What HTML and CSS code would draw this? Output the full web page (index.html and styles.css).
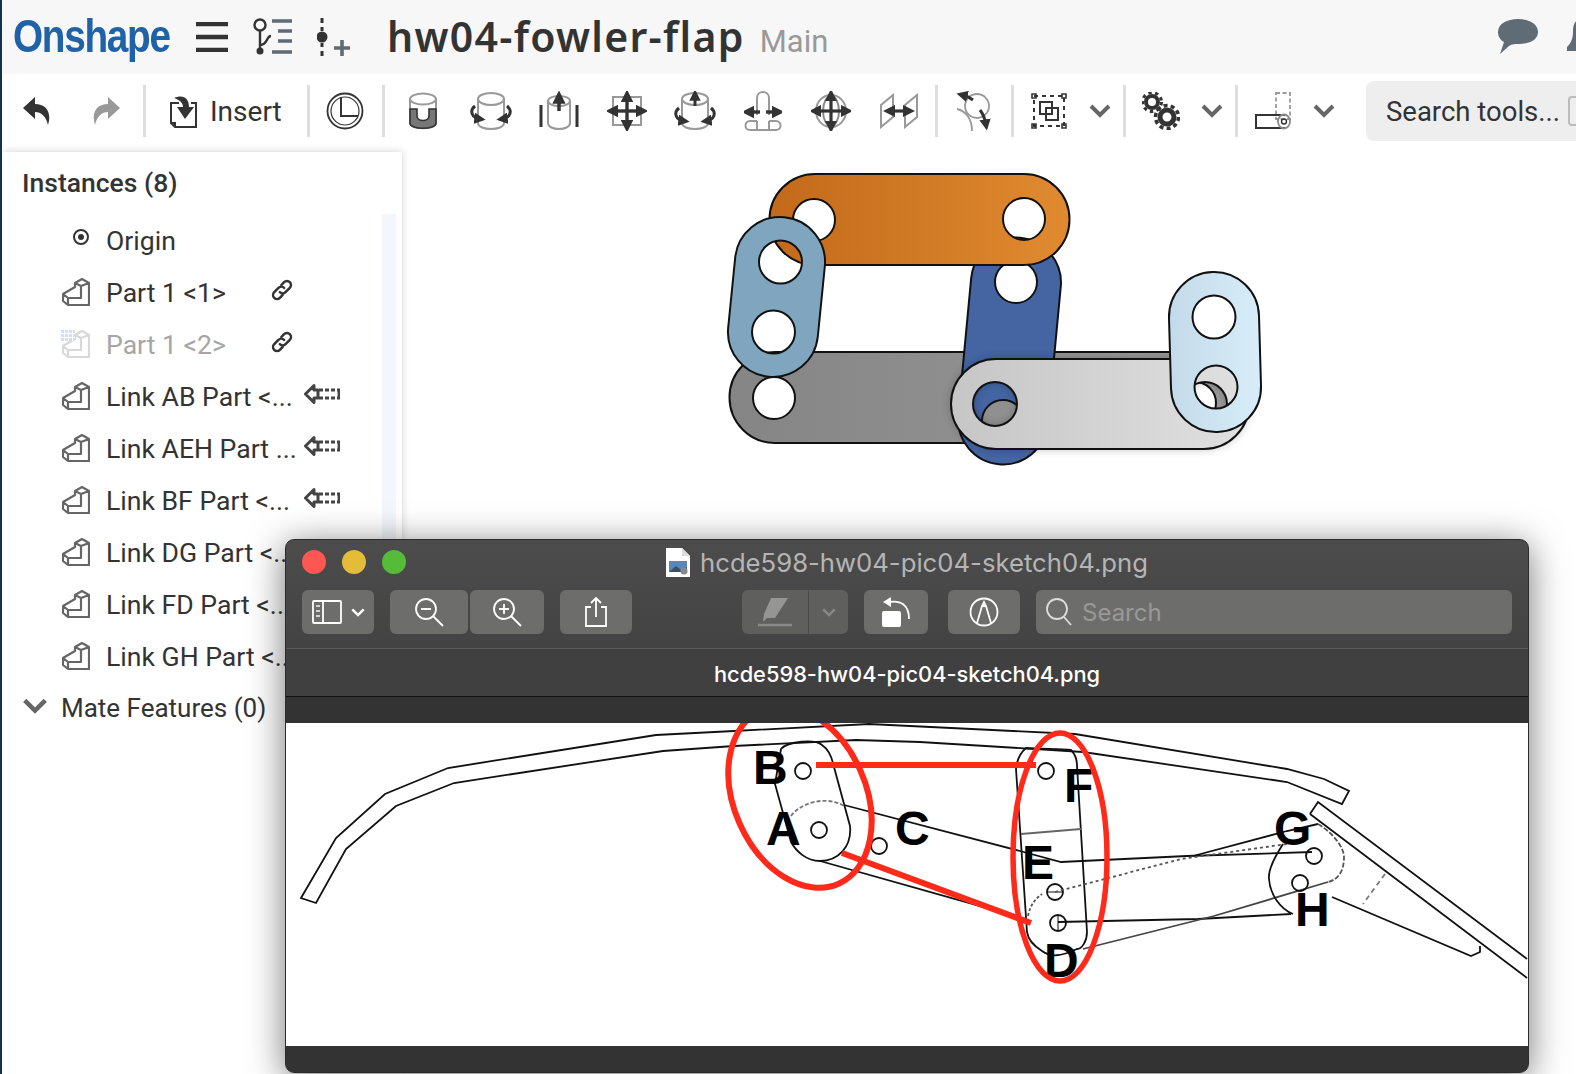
FILE: index.html
```html
<!DOCTYPE html>
<html lang="en">
<head>
    <meta charset="UTF-8">
    <meta name="viewport" content="width=device-width, initial-scale=1.0">
    <title>hw04-fowler-flap</title>
    <link rel="stylesheet" href="styles.css">
</head>
<body>

<!-- shared icons -->
<svg class="defs" width="0" height="0">
    <symbol id="part" viewBox="0 0 28 28">
        <path d="M1 16 L13 9 V5 L20 1 L27 5 V27 H6 L1 23 Z M19 8 L27 5 M19 8 L13 5 M19 8 V20 H6 L1 16 M6 20 V27" fill="none" stroke="currentColor" stroke-width="2.200" stroke-linejoin="round"/>
    </symbol>
    <symbol id="chain" viewBox="0 0 24 24">
        <path transform="translate(12 12) rotate(-45)" d="M3 0 a4 4 0 0 0 -4 -4 H-7 a4 4 0 0 0 0 8 H-3 M-3 0 a4 4 0 0 0 4 4 H7 a4 4 0 0 0 0 -8 H3" fill="none" stroke="currentColor" stroke-width="2.500" stroke-linecap="round"/>
    </symbol>
    <symbol id="ref-arrow" viewBox="0 0 36 20">
        <path d="M10 1.500 L1.500 10 L10 18.500 V14 H14 V6 H10 Z" fill="none" stroke="currentColor" stroke-width="3" stroke-linejoin="round"/>
        <path d="M15 6 H36 M15 14 H36" fill="none" stroke="currentColor" stroke-width="3" stroke-dasharray="4 2"/>
        <path d="M34.800 6 V14" fill="none" stroke="currentColor" stroke-width="2.400"/>
    </symbol>
    <symbol id="chev" viewBox="0 0 22 14">
        <path d="M2 2 L11 11 L20 2" fill="none" stroke="currentColor" stroke-width="4"/>
    </symbol>
    <marker id="tip" viewBox="0 0 8 8" refX="4" refY="4" markerWidth="3.800" markerHeight="3.800" orient="auto">
        <path d="M0 0 L8 4 L0 8 Z" fill="#333"/>
    </marker>
</svg>

<header class="topbar">
    <span class="logo">Onshape</span>
    <svg class="menu-icon" width="32" height="30" viewBox="0 0 32 30"><path d="M0 2 H32 M0 15 H32 M0 28 H32" stroke="#333" stroke-width="4.5"/></svg>
    <svg class="branch-icon" width="40" height="38" viewBox="0 0 40 38">
        <circle cx="8" cy="7" r="5.5" fill="none" stroke="#333" stroke-width="2.4"/>
        <path d="M8 13 V32 M8 27 C16 27 14 18 19 18" fill="none" stroke="#333" stroke-width="2.4"/>
        <circle cx="8" cy="33" r="3.5" fill="#333"/>
        <path d="M20 3 H40 M26 13 H40 M26 23 H40 M20 34 H40" stroke="#5f6b75" stroke-width="3.4"/>
    </svg>
    <svg class="addinst-icon" width="34" height="38" viewBox="0 0 34 38">
        <path d="M5 0 V5 M5 9 V13 M5 25 V29 M5 33 V38" stroke="#333" stroke-width="3"/>
        <circle cx="5" cy="19" r="5.5" fill="#333"/>
        <path d="M17 30 H33 M25 22 V38" stroke="#5f6b75" stroke-width="3.6"/>
    </svg>
    <h1 class="doc-title">hw04-fowler-flap</h1>
    <span class="doc-branch">Main</span>
    <div class="topbar-end">
        <svg width="40" height="36" viewBox="0 0 40 36"><path d="M20 0 C31 0 40 5 40 13 C40 21 31 25 21 25 C17 25 14 25 11 27 L2 35 L6 23 C2 21 0 17 0 13 C0 5 9 0 20 0 Z" fill="#5f6b75"/></svg>
        <svg class="bell" width="30" height="36" viewBox="0 0 30 36"><path d="M15 0 C8 0 6 6 6 12 C6 20 4 24 0 28 V32 H30 V28 C26 24 24 20 24 12 C24 6 22 0 15 0 Z" fill="#5f6b75"/></svg>
    </div>
</header>

<nav class="toolbar">
    <div class="tool w69"><svg width="28" height="29" viewBox="0 0 28 29"><path d="M12 0 L0 11 L12 22 V15 C18 15 23 19 25 28 C29 15 23 7 12 7 Z" fill="#333"/></svg></div>
    <div class="tool w70"><svg width="28" height="29" viewBox="0 0 28 29"><path d="M16 0 L28 11 L16 22 V15 C10 15 5 19 3 28 C-1 15 5 7 16 7 Z" fill="#999"/></svg></div>
    <div class="sep"></div>
    <div class="insert">
        <svg width="28" height="33" viewBox="0 0 28 33">
            <path d="M10 8 H2 V28 L6 32 H27 V8 H22 M6 32 V28 H2" fill="none" stroke="#333" stroke-width="2"/>
            <path d="M5 3 C14 -1 20 3 20 12 H25 L16 24 L8 12 H14 C14 8 11 5 5 3 Z" fill="#333"/>
        </svg>
        <span>Insert</span>
    </div>
    <div class="sep"></div>
    <div class="tool w70"><svg width="38" height="38" viewBox="0 0 38 38" fill="none" stroke="#333"><circle cx="19" cy="19" r="17.5" stroke-width="1.8"/><circle cx="19" cy="19" r="14" stroke-width="1.2"/><path d="M15 5 V24 H32" stroke-width="2"/></svg></div>
    <div class="sep"></div>
    <div class="mates">
        <div class="tool w68"><svg width="36" height="38" viewBox="0 0 36 38" fill="none"><path d="M5 7 V31 C5 38 31 38 31 31 V7" stroke="#999" stroke-width="2"/><ellipse cx="18" cy="7" rx="13" ry="5.5" stroke="#999" stroke-width="2"/><path d="M5 17 H12 V24 C12 30 24 30 24 24 V17 H31 V31 C31 38 5 38 5 31 Z" fill="#777" stroke="#333" stroke-width="1.6"/></svg></div>
        <div class="tool w68"><svg width="44" height="40" viewBox="0 0 44 40" fill="none"><path d="M9 8 V32 C9 40 35 40 35 32 V8" stroke="#999" stroke-width="2"/><ellipse cx="22" cy="8" rx="13" ry="6" stroke="#999" stroke-width="2"/><g stroke="#333" stroke-width="3" marker-end="url(#tip)"><path d="M6 15 C0 20 3 27 11 28"/><path d="M38 15 C44 20 41 27 33 28"/></g></svg></div>
        <div class="tool w68"><svg width="40" height="40" viewBox="0 0 40 40" fill="none"><path d="M9 10 V32 C9 40 31 40 31 32 V10" stroke="#999" stroke-width="2"/><ellipse cx="20" cy="10" rx="11" ry="5" stroke="#999" stroke-width="2"/><path d="M2 14 V36 M38 14 V36" stroke="#333" stroke-width="3"/><path d="M20 20 V6" stroke="#333" stroke-width="3.5" marker-end="url(#tip)"/></svg></div>
        <div class="tool w68"><svg width="40" height="40" viewBox="0 0 40 40" fill="none"><rect x="6" y="6" width="28" height="28" stroke="#999" stroke-width="2"/><g stroke="#333" stroke-width="3.400" marker-end="url(#tip)"><path d="M20 20 V5"/><path d="M20 20 V35"/><path d="M20 20 H5"/><path d="M20 20 H35"/></g></svg></div>
        <div class="tool w68"><svg width="44" height="40" viewBox="0 0 44 40" fill="none"><path d="M9 8 V32 C9 40 35 40 35 32 V8" stroke="#999" stroke-width="2"/><ellipse cx="22" cy="8" rx="13" ry="6" stroke="#999" stroke-width="2"/><g stroke="#333" stroke-width="3" marker-end="url(#tip)"><path d="M22 15 V4"/><path d="M6 17 C0 22 3 29 11 30"/><path d="M38 17 C44 22 41 29 33 30"/></g></svg></div>
        <div class="tool w68"><svg width="38" height="40" viewBox="0 0 38 40" fill="none"><path d="M13 24 V7 C13 -1 25 -1 25 7 V24 M13 30 H6 C0 30 0 39 6 39 H32 C38 39 38 30 32 30 H25 M13 30 V39 M25 30 V39" stroke="#999" stroke-width="2"/><g stroke="#333" stroke-width="3.400" marker-end="url(#tip)"><path d="M16 21 H4"/><path d="M22 21 H34"/></g></svg></div>
        <div class="tool w68"><svg width="40" height="40" viewBox="0 0 40 40" fill="none"><ellipse cx="20" cy="20" rx="15" ry="16" stroke="#999" stroke-width="2"/><ellipse cx="20" cy="20" rx="8" ry="15" stroke="#888" stroke-width="2"/><g stroke="#333" stroke-width="3.200" marker-end="url(#tip)"><path d="M20 20 V4"/><path d="M20 20 V36"/><path d="M20 20 H4"/><path d="M20 20 H36"/></g></svg></div>
        <div class="tool w68"><svg width="38" height="36" viewBox="0 0 38 36" fill="none"><path d="M1 12 L13 2 V24 L1 34 Z M25 12 L37 2 V24 L25 34 Z" stroke="#999" stroke-width="2"/><g stroke="#333" stroke-width="3.200" marker-end="url(#tip)"><path d="M19 18 H9"/><path d="M19 18 H29"/></g></svg></div>
    </div>
    <div class="sep"></div>
    <div class="tool w71"><svg width="36" height="40" viewBox="0 0 36 40" fill="none"><circle cx="21" cy="15" r="12" stroke="#999" stroke-width="1.8"/><path d="M1 18 C10 20 16 28 16 40" stroke="#999" stroke-width="1.8"/><path d="M17 9 C12 5 10 5 6 4" stroke="#333" stroke-width="3" marker-end="url(#tip)"/><path d="M24 19 C28 24 29 28 30 34" stroke="#333" stroke-width="3" marker-end="url(#tip)"/></svg></div>
    <div class="sep"></div>
    <div class="tool w70"><svg width="36" height="36" viewBox="0 0 36 36" fill="none" stroke="#333"><rect x="3" y="3" width="30" height="30" stroke-width="2" stroke-dasharray="4 4"/><path d="M1 1 H5 V5 H1 Z M31 1 H35 V5 H31 Z M1 31 H5 V35 H1 Z M31 31 H35 V35 H31 Z" stroke-width="1.6"/><rect x="9" y="9" width="12" height="12" stroke-width="2"/><rect x="15" y="15" width="12" height="12" stroke-width="2"/></svg></div>
    <div class="chev"><svg width="22" height="14"><use href="#chev"/></svg></div>
    <div class="sep"></div>
    <div class="tool w70"><svg width="38" height="38" viewBox="0 0 38 38" fill="none" stroke="#333"><circle cx="10" cy="10" r="6" stroke-width="4"/><circle cx="10" cy="10" r="9.5" stroke-width="3" stroke-dasharray="3.4 3.4"/><circle cx="25" cy="25" r="7" stroke-width="5"/><circle cx="25" cy="25" r="11.5" stroke-width="3.6" stroke-dasharray="4 3.2"/></svg></div>
    <div class="chev"><svg width="22" height="14"><use href="#chev"/></svg></div>
    <div class="sep"></div>
    <div class="tool w70"><svg width="36" height="38" viewBox="0 0 36 38" fill="none"><rect x="21" y="1" width="14" height="26" stroke="#999" stroke-width="1.8" stroke-dasharray="4 2.5"/><path d="M30 36 H1 V23 H30" stroke="#333" stroke-width="2"/><ellipse cx="29" cy="29.500" rx="6" ry="7" stroke="#888" stroke-width="1.8"/><circle cx="29" cy="29.500" r="2.500" stroke="#333" stroke-width="1.4"/></svg></div>
    <div class="chev"><svg width="22" height="14"><use href="#chev"/></svg></div>
    <div class="search-tools"><span>Search tools...</span><span class="kbd"></span></div>
</nav>

<main class="workspace">
    <aside class="panel">
        <h2 class="panel-title">Instances (8)</h2>
        <div class="panel-body">
            <ul class="instances">
                <li class="row"><span class="row-icon"><svg class="origin" width="18" height="18" viewBox="0 0 18 18"><circle cx="9" cy="9" r="7" fill="none" stroke="#333" stroke-width="2"/><circle cx="9" cy="9" r="3" fill="#333"/></svg></span><span class="row-name">Origin</span></li>
                <li class="row"><span class="row-icon"><svg width="28" height="28"><use href="#part"/></svg></span><span class="row-name">Part 1 &lt;1&gt;</span><svg class="row-link" width="24" height="24"><use href="#chain"/></svg></li>
                <li class="row faded"><span class="row-icon"><svg width="28" height="28"><use href="#part"/></svg><span class="sketch-grid"></span></span><span class="row-name">Part 1 &lt;2&gt;</span><svg class="row-link" width="24" height="24"><use href="#chain"/></svg></li>
                <li class="row"><span class="row-icon"><svg width="28" height="28"><use href="#part"/></svg></span><span class="row-name">Link AB Part &lt;...</span><svg class="row-ref" width="36" height="20"><use href="#ref-arrow"/></svg></li>
                <li class="row"><span class="row-icon"><svg width="28" height="28"><use href="#part"/></svg></span><span class="row-name">Link AEH Part ...</span><svg class="row-ref" width="36" height="20"><use href="#ref-arrow"/></svg></li>
                <li class="row"><span class="row-icon"><svg width="28" height="28"><use href="#part"/></svg></span><span class="row-name">Link BF Part &lt;...</span><svg class="row-ref" width="36" height="20"><use href="#ref-arrow"/></svg></li>
                <li class="row"><span class="row-icon"><svg width="28" height="28"><use href="#part"/></svg></span><span class="row-name">Link DG Part &lt;...</span><svg class="row-ref" width="36" height="20"><use href="#ref-arrow"/></svg></li>
                <li class="row"><span class="row-icon"><svg width="28" height="28"><use href="#part"/></svg></span><span class="row-name">Link FD Part &lt;...</span></li>
                <li class="row"><span class="row-icon"><svg width="28" height="28"><use href="#part"/></svg></span><span class="row-name">Link GH Part &lt;...</span></li>
                <li class="row mate-row"><svg class="mate-chev" width="26" height="16" viewBox="0 0 22 14"><use href="#chev"/></svg><span>Mate Features (0)</span></li>
            </ul>
            <div class="scroll-track"></div>
        </div>
    </aside>

    <section class="viewport">
        <svg class="model" width="1174" height="340" viewBox="402 152 1174 340">
            <defs>
                <linearGradient id="g-orange"><stop offset="0" stop-color="#c26a1a"/><stop offset="1" stop-color="#e08a30"/></linearGradient>
                <linearGradient id="g-gray"><stop offset="0" stop-color="#858585"/><stop offset="1" stop-color="#9a9a9a"/></linearGradient>
                <linearGradient id="g-light"><stop offset="0" stop-color="#c6c6c6"/><stop offset="1" stop-color="#e0e0e0"/></linearGradient>
                <linearGradient id="g-pale"><stop offset="0" stop-color="#c3dae9"/><stop offset="1" stop-color="#d8edf9"/></linearGradient>
                <filter id="soft" x="-20%" y="-20%" width="140%" height="140%"><feGaussianBlur stdDeviation="5"/></filter>
            </defs>
            <g stroke="#111" stroke-width="2" fill-rule="evenodd">
                <!-- grey link, bottom -->
                <path fill="url(#g-gray)" d="M775 352 H1202 A45.500 45.500 0 0 1 1202 443 H775 A45.500 45.500 0 0 1 775 352 Z M753 398 a21 21 0 1 0 42 0 a21 21 0 1 0 -42 0 Z M1174 403 a21 21 0 1 0 42 0 a21 21 0 1 0 -42 0 Z"/>
                <!-- blue link -->
                <path fill="#4464a2" d="M971.200 277.800 A45 45 0 0 1 1060.800 286.200 L1047.800 424.200 A45 45 0 0 1 958.200 415.800 Z M995 282 a21 21 0 1 0 42 0 a21 21 0 1 0 -42 0 Z M982 421 a21 21 0 1 0 42 0 a21 21 0 1 0 -42 0 Z"/>
                <!-- orange link -->
                <path fill="url(#g-orange)" d="M815 174 H1024 A45.500 45.500 0 0 1 1024 265 H815 A45.500 45.500 0 0 1 815 174 Z M793 220 a21 21 0 1 0 42 0 a21 21 0 1 0 -42 0 Z M1003 219 a21 21 0 1 0 42 0 a21 21 0 1 0 -42 0 Z"/>
                <!-- light grey link -->
                <path fill="#000" opacity=".25" stroke="none" filter="url(#soft)" d="M996 359 H1204 A45 45 0 0 1 1204 449 H996 A45 45 0 0 1 996 359 Z M973 404 a22 22 0 1 0 44 0 a22 22 0 1 0 -44 0 Z M1183 404 a22 22 0 1 0 44 0 a22 22 0 1 0 -44 0 Z"/>
                <path fill="url(#g-light)" d="M996 359 H1204 A45 45 0 0 1 1204 449 H996 A45 45 0 0 1 996 359 Z M973 404 a22 22 0 1 0 44 0 a22 22 0 1 0 -44 0 Z M1183 404 a22 22 0 1 0 44 0 a22 22 0 1 0 -44 0 Z"/>
                <!-- steel blue link -->
                <path fill="#7fa6be" d="M735.200 257.500 A45 45 0 0 1 824.800 266.500 L817.800 336.500 A45 45 0 0 1 728.200 327.500 Z M759 262 a21.500 21.500 0 1 0 43 0 a21.500 21.500 0 1 0 -43 0 Z M752 332 a21.500 21.500 0 1 0 43 0 a21.500 21.500 0 1 0 -43 0 Z"/>
                <!-- pale blue link -->
                <path fill="url(#g-pale)" d="M1169 318.300 A45 45 0 0 1 1259 315.700 L1261 385.700 A45 45 0 0 1 1171 388.300 Z M1192.500 317 a21.500 21.500 0 1 0 43 0 a21.500 21.500 0 1 0 -43 0 Z M1194.500 387 a21.500 21.500 0 1 0 43 0 a21.500 21.500 0 1 0 -43 0 Z"/>
            </g>
        </svg>
    </section>
</main>

<div class="preview-window">
    <div class="win-title">
        <div class="lights"><span class="light red"></span><span class="light amber"></span><span class="light green"></span></div>
        <svg class="file-icon" width="24" height="29" viewBox="0 0 24 29"><path d="M0 0 H16 L24 8 V29 H0 Z" fill="#fff"/><path d="M16 0 V8 H24" fill="#ddd"/><rect x="3" y="13" width="18" height="11" fill="#5b87b8"/><path d="M3 24 L10 18 L15 22 L21 19 V24 Z" fill="#3e4e63"/><circle cx="18" cy="23" r="3.500" fill="#888"/></svg>
        <span>hcde598-hw04-pic04-sketch04.png</span>
    </div>
    <div class="win-tools">
        <div class="btn btn-sidebar"><svg width="32" height="24" viewBox="0 0 32 24" fill="none" stroke="#fff" stroke-width="1.8"><rect x="1" y="1" width="28" height="22" rx="1"/><path d="M11 1 V23"/><path d="M4 6 H8 M4 11 H8 M4 16 H8" stroke-opacity=".7"/></svg><svg class="btn-chev" width="14" height="9" viewBox="0 0 22 14"><use href="#chev"/></svg></div>
        <div class="btn btn-zoomout"><svg width="30" height="30" viewBox="0 0 30 30" fill="none" stroke="#fff" stroke-width="1.8"><circle cx="12" cy="12" r="10"/><path d="M19 19 L29 29 M7 12 H17"/></svg></div>
        <div class="btn btn-zoomin"><svg width="30" height="30" viewBox="0 0 30 30" fill="none" stroke="#fff" stroke-width="1.8"><circle cx="12" cy="12" r="10"/><path d="M19 19 L29 29 M7 12 H17 M12 7 V17"/></svg></div>
        <div class="btn btn-share"><svg width="24" height="30" viewBox="0 0 24 30" fill="none" stroke="#fff" stroke-width="1.8"><path d="M7 10 H2 V29 H22 V10 H17 M12 20 V1 M7 6 L12 1 L17 6"/></svg></div>
        <div class="btn btn-markup">
            <span class="markup-pen"><svg width="36" height="32" viewBox="0 0 36 32"><path d="M14 2 H31 L18 22 H10 L6 26 L7 18 Z" fill="#959593"/><path d="M1 29 H35" stroke="#888" stroke-width="2.400"/></svg></span>
            <span class="markup-more"><svg width="14" height="9" viewBox="0 0 22 14"><use href="#chev"/></svg></span>
        </div>
        <div class="btn btn-rotate"><svg width="30" height="30" viewBox="0 0 30 30" fill="none"><rect x="1" y="14" width="19" height="16" rx="2" fill="#fff"/><path d="M8 5 C20 3 28 8 28 22" stroke="#fff" stroke-width="1.8"/><path d="M10 0 L2 5 L10 10 Z" fill="#fff"/></svg></div>
        <div class="btn btn-annotate"><svg width="30" height="30" viewBox="0 0 30 30" fill="none" stroke="#fff" stroke-width="1.8"><circle cx="15" cy="15" r="13.500"/><path d="M8 26 L13 9 L15 5 L17 9 L22 26 M13 9 H17"/></svg></div>
        <div class="btn btn-search"><svg width="26" height="28" viewBox="0 0 26 28" fill="none" stroke="#ddd" stroke-width="1.8"><circle cx="11" cy="11" r="10"/><path d="M18 19 L25 27"/></svg><span>Search</span></div>
    </div>
    <div class="win-name">hcde598-hw04-pic04-sketch04.png</div>
    <div class="win-band"></div>
    <svg class="sketch" width="1242" height="323" viewBox="286 724 1242 323">
        <g fill="none" stroke="#111" stroke-width="1.8">
            <!-- wing skin -->
            <path d="M301 899 L336 839 L385 795 L448 769 L656 736 L734 732 L869 725 L1075 735 L1287 770 L1324 780 L1349 792 L1342 805 L1287 783 L1083 753 L920 743 L856 741 L734 747 L663 752 L454 784 L396 807 L346 850 L316 904 Z"/>
            <!-- flap -->
            <path d="M1310 815 L1318 803 L1527 960 M1310 815 L1527 979"/>
            <path d="M1332 898 L1471 957 L1480 953 L1480 947"/>
            <path d="M1385 875 L1363 905" stroke="#777" stroke-dasharray="5 4"/>
            <!-- links on the left -->
            <path d="M775 785 L781 750 C788 742 815 740 822 746 C828 750 832 758 834 768 L850 827 C852 848 838 862 820 862 C806 862 796 852 791 843 Z"/>
            <path d="M791 817 C800 804 826 796 844 807" stroke="#777" stroke-dasharray="4 2"/>
            <circle cx="803" cy="772" r="8"/>
            <circle cx="819" cy="831" r="8"/>
            <circle cx="879" cy="847" r="8"/>
            <path d="M844 806 L1020 852 L1061 863 L1187 857 L1312 853"/>
            <path d="M820 862 L1026 920"/>
            <!-- link in the middle -->
            <path d="M1026 749 C1040 750 1060 750 1071 751 C1075 755 1077 760 1077 767 L1087 933 C1087 942 1082 950 1077 950 C1060 958 1050 958 1042 952 C1034 947 1028 940 1027 933 L1016 770 C1017 760 1020 754 1026 749 Z"/>
            <path d="M1021 835 L1081 830" stroke="#666"/>
            <circle cx="1046" cy="772" r="8"/>
            <circle cx="1055" cy="893" r="8"/>
            <circle cx="1058" cy="924" r="8"/>
            <path d="M1048 893 H1062 M1058 916 V932" stroke-width="1"/>
            <path d="M1055 893 L1181 860 L1287 845" stroke="#555" stroke-dasharray="3 3"/>
            <path d="M1028 917 C1030 906 1036 899 1042 895" stroke="#555" stroke-dasharray="3 2"/>
            <path d="M1193 857 L1287 832 L1318 825"/>
            <path d="M1058 923 L1198 920 L1291 915"/>
            <path d="M1083 950 L1214 917 L1328 883" stroke="#444"/>
            <!-- link on the right -->
            <path d="M1283 845 C1272 862 1268 872 1269 880 C1270 895 1280 910 1293 915"/>
            <path d="M1318 825 C1335 835 1344 850 1344 858 C1344 870 1340 880 1328 883" stroke="#555" stroke-dasharray="5 2"/>
            <circle cx="1314" cy="857" r="8"/>
            <circle cx="1300" cy="884" r="8"/>
        </g>
        <g class="sketch-labels">
            <text x="753" y="785">B</text>
            <text x="766" y="846">A</text>
            <text x="895" y="846">C</text>
            <text x="1064" y="803">F</text>
            <text x="1022" y="880">E</text>
            <text x="1044" y="978">D</text>
            <text x="1274" y="846">G</text>
            <text x="1295" y="927">H</text>
        </g>
        <g fill="none" stroke="#ff2a1a">
            <ellipse cx="800" cy="798" rx="66" ry="95" transform="rotate(-24 800 798)" stroke-width="6"/>
            <ellipse cx="1060" cy="858" rx="47" ry="124" stroke-width="5.500"/>
            <path d="M816 766 H1036 M842 854 L1031 924" stroke-width="6"/>
        </g>
    </svg>
    <div class="win-foot"></div>
</div>

</body>
</html>
```

FILE: styles.css
```css
* {
    box-sizing: border-box;
}
html, body {
    height: 100%;
    margin: 0;
}
body {
    border-left: 2px solid #12324f;
    background-color: #fff;
    color: #333;
    font-family: Roboto, "Noto Sans", sans-serif;
    overflow: hidden;
}
.defs {
    display: block;
    height: 0;
    position: absolute;
}

/* top bar */
.topbar {
    display: flex;
    align-items: center;
    height: 74px;
    background-color: #f7f7f7;
    white-space: nowrap;
}
.logo {
    flex: none;
    width: 158px;
    margin-left: 11px;
    margin-top: -2px;
    color: #1f62a8;
    font-family: "Liberation Sans", sans-serif;
    font-size: 47px;
    font-weight: 700;
    letter-spacing: -1.6px;
    line-height: 60px;
    transform: scaleX(0.825);
    transform-origin: left center;
}
.menu-icon {
    margin-left: 25px;
}
.branch-icon {
    margin-left: 24px;
}
.addinst-icon {
    margin-left: 25px;
}
.doc-title {
    margin: -2px 0 0 36px;
    color: #333;
    font-family: "Noto Sans", sans-serif;
    font-size: 41px;
    font-weight: 600;
    letter-spacing: 1.3px;
}
.doc-branch {
    margin-left: 15px;
    margin-top: 8px;
    color: #999;
    font-size: 31px;
}
.topbar-end {
    display: flex;
    align-items: center;
    gap: 29px;
    margin-left: auto;
    margin-right: -21px;
}

/* tool bar */
.toolbar {
    display: flex;
    align-items: center;
    height: 74px;
    white-space: nowrap;
}
.tool {
    display: flex;
    flex: none;
    align-items: center;
    justify-content: center;
}
.w68 { width: 68px; }
.w69 { width: 69px; }
.w70 { width: 70px; }
.w71 { width: 71px; }
.sep {
    flex: none;
    width: 3px;
    height: 52px;
    margin-left: 2px;
    background-color: #ddd;
}
.insert {
    display: flex;
    flex: none;
    align-items: center;
    gap: 13px;
    width: 159px;
    padding-left: 23px;
    font-size: 28px;
}
.mates {
    display: flex;
    flex: none;
    margin-left: 4px;
}
.chev {
    display: flex;
    flex: none;
    justify-content: center;
    width: 32px;
    margin-right: 5px;
    color: #666;
}
.search-tools {
    display: flex;
    flex: none;
    align-items: center;
    gap: 8px;
    width: 260px;
    height: 60px;
    margin-left: 21px;
    padding-left: 20px;
    border-radius: 8px;
    background-color: #eee;
    font-size: 27.5px;
}
.kbd {
    width: 24px;
    height: 30px;
    border: 2px solid #bbb;
    border-radius: 4px;
}

/* instances panel */
.workspace {
    display: flex;
    padding-top: 4px;
}
.panel {
    flex: none;
    width: 400px;
    height: 922px;
    background-color: #fff;
    box-shadow: 0 0 8px rgba(0, 0, 0, 0.18);
}
.panel-title {
    margin: 0;
    padding-left: 20px;
    font-size: 26.5px;
    font-weight: 500;
    line-height: 62px;
}
.panel-body {
    display: flex;
}
.instances {
    flex: 1;
    margin: 0;
    padding: 0;
    list-style: none;
    font-size: 26.6px;
}
.scroll-track {
    flex: none;
    width: 14px;
    height: 420px;
    margin-right: 6px;
    background-color: #f3f6fa;
}
.row {
    display: flex;
    align-items: center;
    height: 52px;
    padding-left: 60px;
}
.row-icon {
    position: relative;
    display: flex;
    justify-content: flex-end;
    width: 28px;
    margin-right: 16px;
    color: #666;
}
.origin {
    margin-top: -6px;
}
.row-name {
    width: 160px;
    white-space: nowrap;
}
.row-link {
    margin-top: -4px;
    margin-left: 4px;
    color: #333;
}
.row-ref {
    margin-top: -4px;
    margin-left: 38px;
    color: #444;
}
.faded .row-name {
    color: #a6a6a6;
}
.faded .row-icon svg {
    color: #d8d8d8;
}
.faded .row-link {
    color: #333;
}
.sketch-grid {
    position: absolute;
    top: -1px;
    left: -2px;
    width: 15px;
    height: 12px;
    background-color: #cfe0f5;
    background-image: linear-gradient(#fff 1px, transparent 1px), linear-gradient(90deg, #fff 1px, transparent 1px);
    background-size: 4px 4px;
}
.mate-row {
    padding-left: 20px;
    font-size: 26px;
}
.mate-chev {
    margin-top: -4px;
    margin-right: 13px;
    color: #666;
}

/* model area */
.viewport {
    flex: 1;
}
.model {
    display: block;
}

/* preview window, floats over the page */
.preview-window {
    position: absolute;
    top: 539px;
    left: 285px;
    display: flex;
    flex-direction: column;
    width: 1244px;
    height: 534px;
    overflow: hidden;
    border: 1px solid #2b2b2b;
    border-radius: 9px;
    background: linear-gradient(#4c4c4c, #3f3f3f 30%);
    box-shadow: 0 6px 36px rgba(0, 0, 0, 0.55);
    font-family: Inter, "Liberation Sans", sans-serif;
}
.win-title {
    position: relative;
    display: flex;
    flex: none;
    align-items: center;
    justify-content: center;
    gap: 10px;
    height: 44px;
    margin-bottom: 6px;
    color: #b5b5b5;
    font-size: 25.7px;
}
.lights {
    position: absolute;
    top: 10px;
    left: 16px;
    display: flex;
    gap: 16px;
}
.light {
    width: 24px;
    height: 24px;
    border-radius: 50%;
}
.red { background-color: #fc5753; }
.amber { background-color: #e3bc3a; }
.green { background-color: #55bc3a; }
.win-tools {
    display: flex;
    flex: none;
    height: 59px;
    padding-bottom: 14px;
    border-bottom: 1px solid #5a5a5a;
}
.btn {
    display: flex;
    flex: none;
    align-items: center;
    justify-content: center;
    height: 44px;
    border-radius: 6px;
    background-color: #6d6d6b;
}
.btn-sidebar {
    gap: 7px;
    width: 72px;
    margin-left: 16px;
    color: #fff;
}
.btn-zoomout {
    width: 78px;
    margin-left: 16px;
}
.btn-zoomin {
    width: 74px;
    margin-left: 2px;
}
.btn-share {
    width: 72px;
    margin-left: 16px;
}
.btn-markup {
    width: 106px;
    margin-left: 110px;
    background-color: #5f5f5d;
}
.markup-pen {
    display: flex;
    align-items: center;
    justify-content: center;
    width: 67px;
    height: 44px;
    border-right: 1px solid #4a4a4a;
}
.markup-more {
    display: flex;
    align-items: center;
    justify-content: center;
    width: 39px;
    color: #888;
}
.btn-rotate {
    width: 64px;
    margin-left: 16px;
}
.btn-annotate {
    width: 72px;
    margin-left: 20px;
}
.btn-search {
    justify-content: flex-start;
    gap: 10px;
    width: 476px;
    margin-left: 16px;
    padding-left: 10px;
    color: #999;
    font-size: 24px;
}
.win-name {
    flex: none;
    height: 48px;
    border-bottom: 1px solid #111;
    color: #fff;
    font-size: 21.8px;
    font-weight: 500;
    line-height: 50px;
    text-align: center;
    background-color: #404040;
}
.win-band {
    flex: none;
    height: 26px;
    background-color: #333;
}
.sketch {
    display: block;
    flex: none;
    background-color: #fff;
}
.sketch-labels text {
    fill: #000;
    font-family: "Liberation Sans", Arial, sans-serif;
    font-size: 48px;
    font-weight: 700;
}
.win-foot {
    flex: 1;
    background-color: #333;
}
```
